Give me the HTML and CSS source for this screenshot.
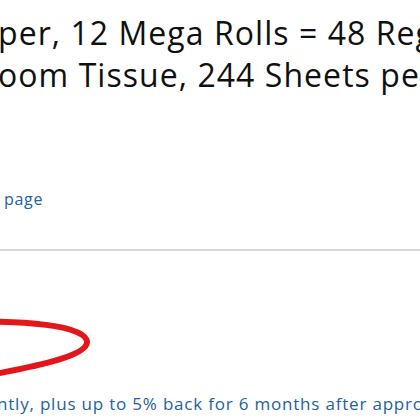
FILE: index.html
```html
<!DOCTYPE html>
<html>
<head>
<meta charset="utf-8">
<link rel="stylesheet" href="styles.css">
</head>
<body>
<div class="page">
  <h1 class="title">
    <span class="line">per, 12 Mega Rolls = 48 Regular Rolls,</span>
    <span class="line">oom Tissue, 244 Sheets per Roll</span>
  </h1>
  <a class="link" href="#">page</a>
  <hr class="divider">
  <div class="promo">
    <svg class="circle" width="100" height="70" viewBox="0 0 100 70">
      <path d="M-40 11 C 20 9, 87 14, 87 31 C 87 46, 30 56, -10 64" fill="none" stroke="#e3161c" stroke-width="6" stroke-linecap="round"/>
    </svg>
    <p class="offer">ntly, plus up to 5% back for 6 months after approval</p>
  </div>
</div>
</body>
</html>
```
FILE: styles.css
```css
html, body {
  margin: 0;
  padding: 0;
  background: #fff;
  overflow: hidden;
}
.page {
  width: 420px;
  height: 420px;
  overflow: hidden;
  font-family: "Open Sans", "Noto Sans", sans-serif;
}
.title {
  margin: 0;
  padding-top: 12px;
  font-weight: 400;
  font-size: 32px;
  line-height: 42px;
  letter-spacing: 1.05px;
  color: #0f1111;
}
.line {
  display: block;
  white-space: nowrap;
  margin-left: -2px;
}
.link {
  display: block;
  margin-top: 93px;
  margin-left: 4px;
  font-size: 16px;
  line-height: 20px;
  letter-spacing: 0.7px;
  color: #2162a1;
  text-decoration: none;
}
.divider {
  margin: 40px 0 0;
  border: 0;
  height: 2px;
  background: #d5d9d9;
}
.promo {
  padding-top: 60px;
}
.circle {
  display: block;
}
.offer {
  margin: 12px 0 0 -3px;
  white-space: nowrap;
  font-size: 17px;
  line-height: 22px;
  letter-spacing: 0.8px;
  color: #2162a1;
}
```
